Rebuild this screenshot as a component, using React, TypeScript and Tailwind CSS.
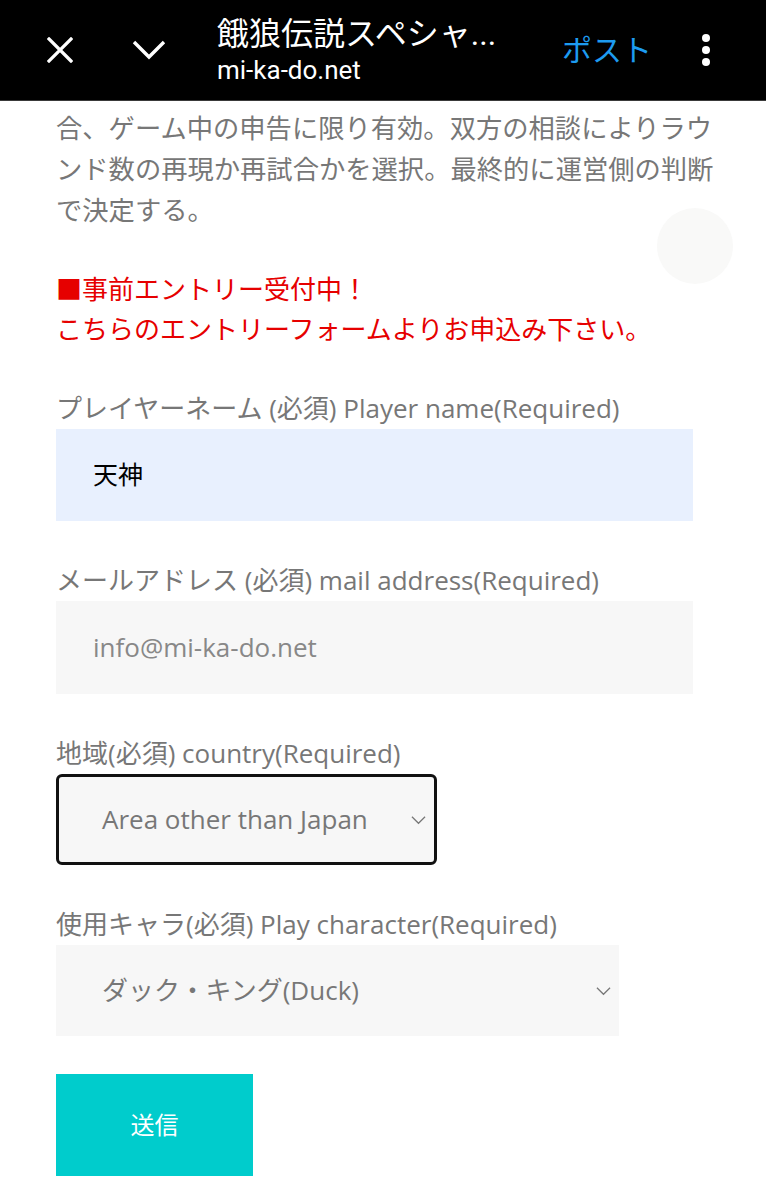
import React from 'react';

const jp = "font-['Open_Sans','Noto_Sans_CJK_JP',sans-serif]";

function Chevron({ className }: { className?: string }) {
  return (
    <svg viewBox="0 0 16 10" className={className} fill="none" stroke="#777" strokeWidth="1.3">
      <path d="M1 1.5 L8 8.5 L15 1.5" />
    </svg>
  );
}

function Field({ label, children }: { label: string; children: React.ReactNode }) {
  return (
    <div className="flex flex-col">
      <label className="text-[26px] leading-[36px] text-[#777]">{label}</label>
      <div className="mt-[3px]">{children}</div>
    </div>
  );
}

export default function App() {
  return (
    <div className={`relative w-[766px] h-[1200px] overflow-hidden bg-white ${jp}`}>
      {/* ブラウザのヘッダー */}
      <header className="h-[101px] bg-black border-b border-[#3a3a3a] flex items-center font-['Roboto','Noto_Sans_CJK_JP',sans-serif]">
        <svg viewBox="0 0 26 26" className="ml-[47px] w-[26px] h-[26px]" stroke="white" strokeWidth="3.2" strokeLinecap="square">
          <path d="M2 2 L24 24 M24 2 L2 24" />
        </svg>
        <svg viewBox="0 0 34 20" className="ml-[59px] w-[34px] h-[20px]" fill="none" stroke="white" strokeWidth="3.4">
          <path d="M2 2 L17 17 L32 2" />
        </svg>
        <div className="ml-[51px] flex flex-col">
          <span className="text-[32px] leading-[38px] text-white">餓狼伝説スペシャ...</span>
          <span className="text-[26px] leading-[32px] text-white mt-[1px]">mi-ka-do.net</span>
        </div>
        <span className="ml-auto text-[30px] text-[#1d9bf0] mr-[50px]">ポスト</span>
        <div className="flex flex-col gap-[4px] mr-[56px]">
          <span className="w-[8px] h-[8px] rounded-full bg-white" />
          <span className="w-[8px] h-[8px] rounded-full bg-white" />
          <span className="w-[8px] h-[8px] rounded-full bg-white" />
        </div>
      </header>

      {/* ページ上へ戻るボタン（薄い丸） */}
      <div className="absolute left-[657px] top-[208px] w-[76px] h-[76px] rounded-full bg-[#f9f9f8]" />

      <main className="pl-[56px] pt-[5px]">
        <p className="w-[660px] text-[26.3px] leading-[41px] text-[#777] font-['Noto_Sans_CJK_JP',sans-serif]">
          合、ゲーム中の申告に限り有効。双方の相談によりラウンド数の再現か再試合かを選択。最終的に運営側の判断で決定する。
        </p>

        <p className="mt-[39px] text-[26px] leading-[40px] text-[#e60000] font-['Noto_Sans_CJK_JP',sans-serif]">
          ■事前エントリー受付中！
          <br />
          こちらのエントリーフォームよりお申込み下さい。
        </p>

        <div className="mt-[42px] flex flex-col gap-[41px]">
          <Field label="プレイヤーネーム (必須) Player name(Required)">
            <div className="w-[637px] h-[92px] bg-[#e8f0fe] flex items-center pl-[37px] text-[25px] text-black">
              天神
            </div>
          </Field>

          <Field label="メールアドレス (必須) mail address(Required)">
            <div className="w-[637px] h-[93px] bg-[#f7f7f7] flex items-center pl-[37px] text-[26px] text-[#888]">
              info@mi-ka-do.net
            </div>
          </Field>

          <Field label="地域(必須) country(Required)">
            <div className="w-[381px] h-[91px] bg-[#f7f7f7] border-[3px] border-[#111] rounded-[6px] flex items-center pl-[43px] pr-[8px] text-[26px] text-[#777]">
              <span>Area other than Japan</span>
              <Chevron className="ml-auto w-[15px] h-[10px]" />
            </div>
          </Field>

          <Field label="使用キャラ(必須) Play character(Required)">
            <div className="w-[563px] h-[91px] bg-[#f7f7f7] flex items-center pl-[46px] pr-[8px] text-[26px] text-[#777]">
              <span>ダック・キング(Duck)</span>
              <Chevron className="ml-auto w-[15px] h-[10px]" />
            </div>
          </Field>
        </div>

        <button className="mt-[38px] w-[197px] h-[102px] bg-[#00cccc] text-white text-[24px] flex items-center justify-center">
          送信
        </button>
      </main>
    </div>
  );
}
